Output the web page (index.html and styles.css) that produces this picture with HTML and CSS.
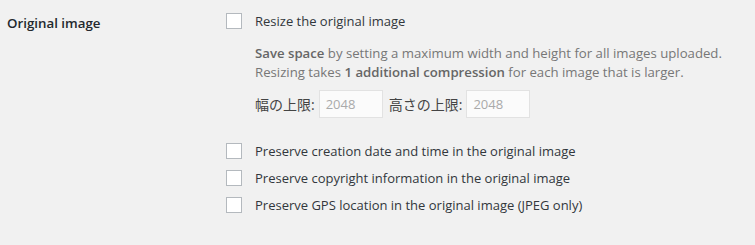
FILE: index.html
```html
<!DOCTYPE html>
<html>
<head>
<meta charset="utf-8">
<link rel="stylesheet" href="styles.css">
</head>
<body>
<div class="row">
  <div class="th">Original image</div>
  <div class="td">
    <label class="check"><span class="box"></span><span>Resize the original image</span></label>
    <div class="sub">
      <p class="desc"><strong>Save space</strong> by setting a maximum width and height for all images uploaded.<br>Resizing takes <strong>1 additional compression</strong> for each image that is larger.</p>
      <div class="dims">
        <span class="dlabel">幅の上限:</span><span class="input">2048</span>
        <span class="dlabel">高さの上限:</span><span class="input">2048</span>
      </div>
    </div>
    <div class="list">
      <label class="check"><span class="box"></span><span>Preserve creation date and time in the original image</span></label>
      <label class="check"><span class="box"></span><span>Preserve copyright information in the original image</span></label>
      <label class="check"><span class="box"></span><span>Preserve GPS location in the original image (JPEG only)</span></label>
    </div>
  </div>
</div>
</body>
</html>
```

FILE: styles.css
```css
html, body {
  margin: 0;
  padding: 0;
  background: #f1f1f1;
}
body {
  font-family: "Open Sans", "Noto Sans CJK JP", sans-serif;
  font-size: 13px;
  color: #32373c;
}
.row {
  display: flex;
  padding: 13px 0 0 7px;
}
.th {
  width: 219px;
  font-weight: 600;
  font-size: 13.3px;
  color: #23282d;
  line-height: 18px;
  padding-top: 1px;
}
.td {
  display: flex;
  flex-direction: column;
}
.check {
  display: flex;
  align-items: center;
  gap: 13px;
  line-height: 16px;
  color: #32373c;
}
.box {
  width: 14px;
  height: 14px;
  border: 1px solid #b4b9be;
  background: #fff;
  flex: none;
}
.sub {
  padding-left: 29px;
  margin-top: 15px;
}
.desc {
  margin: 0;
  color: #777;
  line-height: 19px;
  font-size: 13.2px;
}
.desc strong {
  font-weight: 600;
  color: #666;
}
.dims {
  display: flex;
  align-items: center;
  margin-top: 8px;
}
.dlabel {
  color: #444;
  font-size: 14px;
  margin-right: 4px;
}
.input {
  width: 50px;
  height: 26px;
  line-height: 26px;
  padding: 0 6px;
  border: 1px solid #e2e2e2;
  background: #fbfbfb;
  color: #aaa;
  margin-right: 6px;
}
.list {
  display: flex;
  flex-direction: column;
  gap: 11px;
  margin-top: 25px;
}
```
